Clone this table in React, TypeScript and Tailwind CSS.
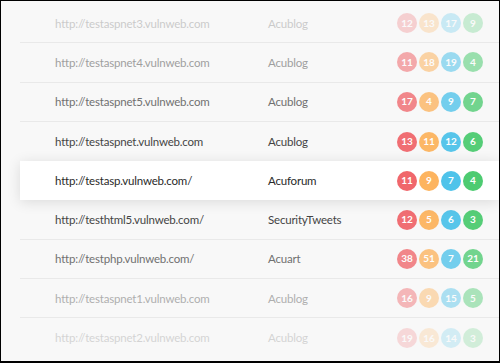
import React from "react";

type Row = { url: string; name: string; nums: number[]; cls: string; border: boolean; highlight?: boolean };

const rows: Row[] = [
  { url: "http://testaspnet3.vulnweb.com", name: "Acublog", nums: [12, 13, 17, 9], cls: "opacity-[0.28] text-[#555]", border: true },
  { url: "http://testaspnet4.vulnweb.com", name: "Acublog", nums: [11, 18, 19, 4], cls: "opacity-[0.55] text-[#555]", border: true },
  { url: "http://testaspnet5.vulnweb.com", name: "Acublog", nums: [17, 4, 9, 7], cls: "opacity-[0.78] text-[#4a4a4a]", border: true },
  { url: "http://testaspnet.vulnweb.com", name: "Acublog", nums: [13, 11, 12, 6], cls: "opacity-[0.95] text-[#3a3a3a]", border: false },
  { url: "http://testasp.vulnweb.com/", name: "Acuforum", nums: [11, 9, 7, 4], cls: "text-[#2a2a2a]", border: false, highlight: true },
  { url: "http://testhtml5.vulnweb.com/", name: "SecurityTweets", nums: [12, 5, 6, 3], cls: "opacity-[0.95] text-[#3a3a3a]", border: true },
  { url: "http://testphp.vulnweb.com/", name: "Acuart", nums: [38, 51, 7, 21], cls: "opacity-[0.78] text-[#4a4a4a]", border: true },
  { url: "http://testaspnet1.vulnweb.com", name: "Acublog", nums: [16, 9, 15, 5], cls: "opacity-[0.45] text-[#555]", border: true },
  { url: "http://testaspnet2.vulnweb.com", name: "Acublog", nums: [19, 16, 14, 3], cls: "opacity-[0.22] text-[#555]", border: false },
];

const badgeColors = ["bg-[#f0676c]", "bg-[#fdb45f]", "bg-[#4fc3ea]", "bg-[#4dcb71]"];

function Badges({ nums }: { nums: number[] }) {
  return (
    <div className="flex gap-[2px]">
      {nums.map((n, i) => (
        <div
          key={i}
          className={`w-5 h-5 rounded-full flex items-center justify-center text-white text-[10px] font-bold tracking-normal ${badgeColors[i]}`}
        >
          {n}
        </div>
      ))}
    </div>
  );
}

function Cells({ r }: { r: Row }) {
  return (
    <div className={`flex items-center w-full ${r.cls}`}>
      <div className="w-[248px] pl-[35px] text-[11.5px] tracking-[-0.2px]">{r.url}</div>
      <div className="w-[129px] text-[11.5px] tracking-[-0.2px]">{r.name}</div>
      <Badges nums={r.nums} />
    </div>
  );
}

export default function App() {
  return (
    <div className="w-[500px] h-[363px] overflow-hidden border-x border-t border-b-2 border-black bg-[#f8f8f8] pt-[3px] font-['Lato','Open_Sans',sans-serif]">
      <div className="flex flex-col pl-[19px]">
        {rows.map((r, i) =>
          r.highlight ? (
            <div
              key={i}
              className="h-[39.3px] bg-white flex items-center shadow-[0_2px_14px_rgba(0,0,0,0.12)] relative z-10"
            >
              <Cells r={r} />
            </div>
          ) : (
            <div
              key={i}
              className={`h-[39.3px] flex items-center ${r.border ? "border-b border-[#e9e9e9]" : ""}`}
            >
              <Cells r={r} />
            </div>
          )
        )}
      </div>
    </div>
  );
}
